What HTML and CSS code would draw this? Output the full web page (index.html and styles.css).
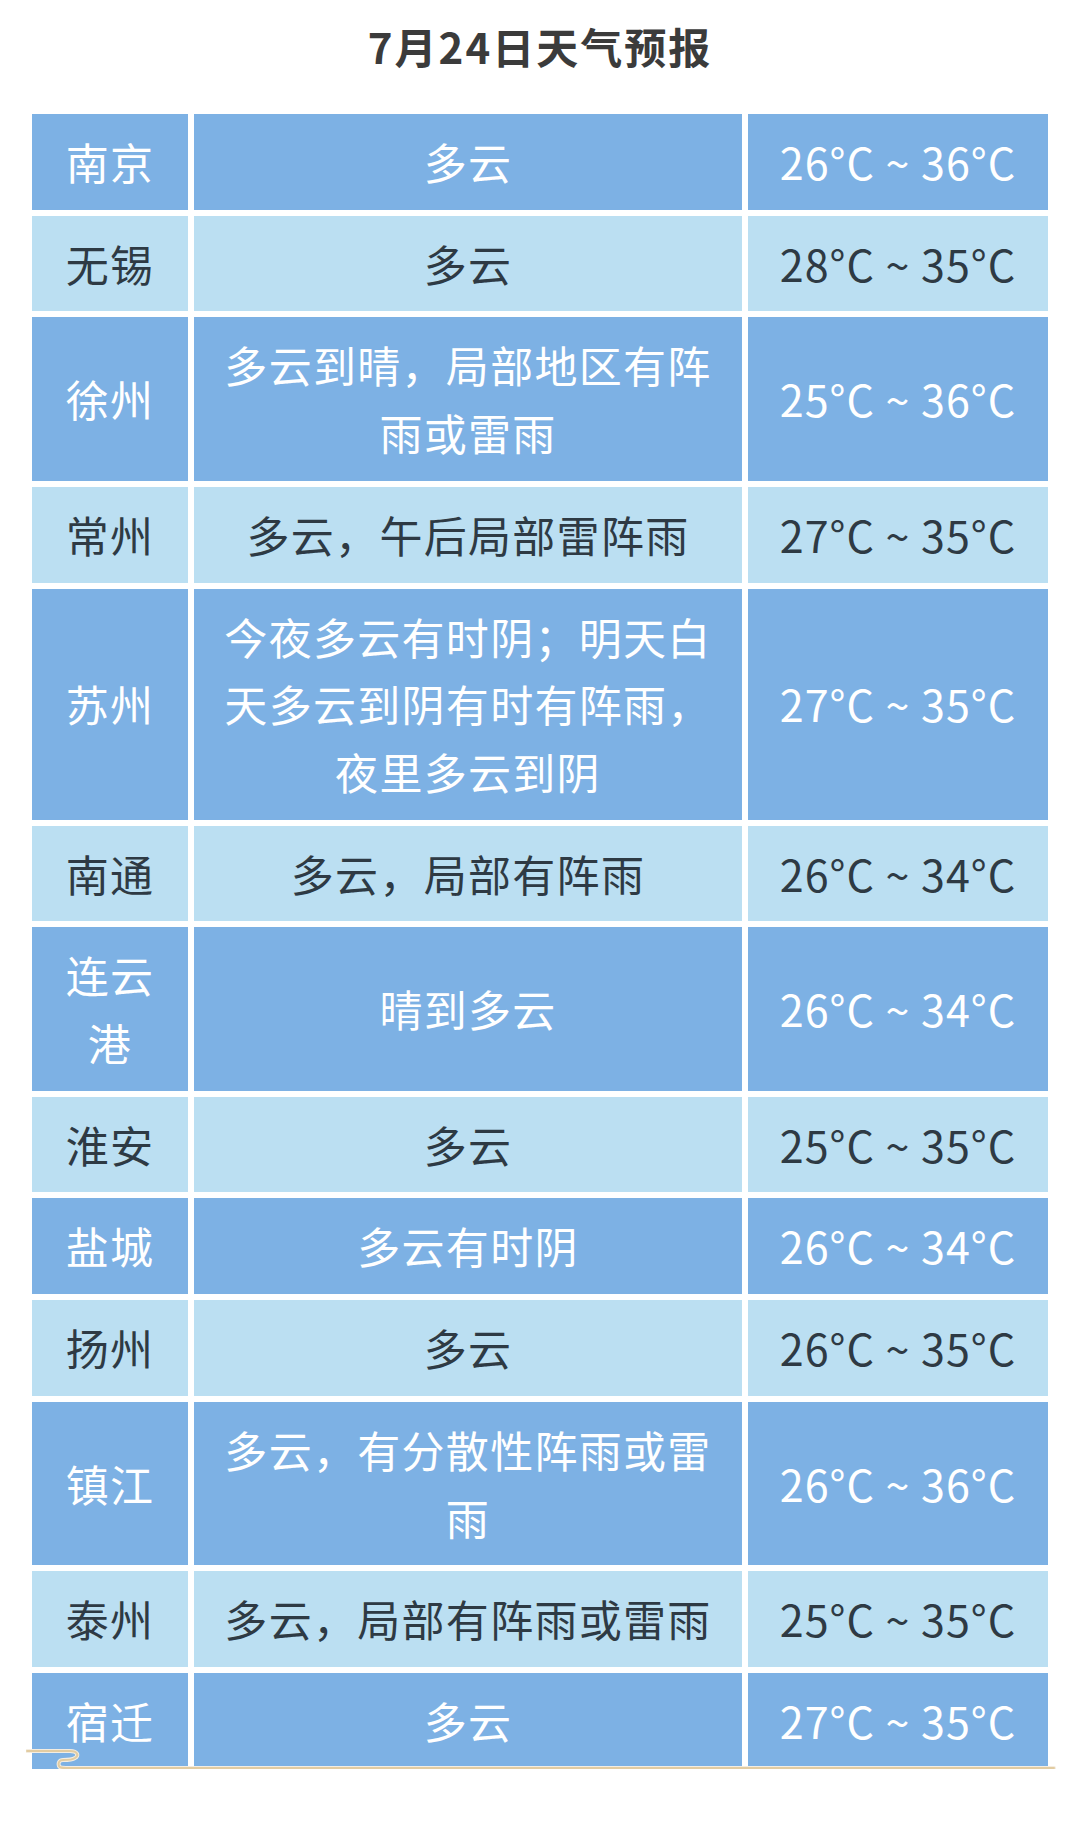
FILE: index.html
```html
<!DOCTYPE html>
<html lang="zh-CN">
<head>
<meta charset="utf-8">
<title>7月24日天气预报</title>
<link rel="stylesheet" href="styles.css">
</head>
<body>
<div class="page">
  <h1 class="title">7月24日天气预报</h1>
  <div class="table-wrap">
    <div class="grid">
      <div class="cell city dark">南京</div><div class="cell desc dark">多云</div><div class="cell temp dark">26°C ~ 36°C</div>
      <div class="cell city light">无锡</div><div class="cell desc light">多云</div><div class="cell temp light">28°C ~ 35°C</div>
      <div class="cell city dark">徐州</div><div class="cell desc dark">多云到晴，局部地区有阵雨或雷雨</div><div class="cell temp dark">25°C ~ 36°C</div>
      <div class="cell city light">常州</div><div class="cell desc light">多云，午后局部雷阵雨</div><div class="cell temp light">27°C ~ 35°C</div>
      <div class="cell city dark">苏州</div><div class="cell desc dark">今夜多云有时阴；明天白天多云到阴有时有阵雨，夜里多云到阴</div><div class="cell temp dark">27°C ~ 35°C</div>
      <div class="cell city light">南通</div><div class="cell desc light">多云，局部有阵雨</div><div class="cell temp light">26°C ~ 34°C</div>
      <div class="cell city dark">连云港</div><div class="cell desc dark">晴到多云</div><div class="cell temp dark">26°C ~ 34°C</div>
      <div class="cell city light">淮安</div><div class="cell desc light">多云</div><div class="cell temp light">25°C ~ 35°C</div>
      <div class="cell city dark">盐城</div><div class="cell desc dark">多云有时阴</div><div class="cell temp dark">26°C ~ 34°C</div>
      <div class="cell city light">扬州</div><div class="cell desc light">多云</div><div class="cell temp light">26°C ~ 35°C</div>
      <div class="cell city dark">镇江</div><div class="cell desc dark">多云，有分散性阵雨或雷雨</div><div class="cell temp dark">26°C ~ 36°C</div>
      <div class="cell city light">泰州</div><div class="cell desc light">多云，局部有阵雨或雷雨</div><div class="cell temp light">25°C ~ 35°C</div>
      <div class="cell city dark">宿迁</div><div class="cell desc dark">多云</div><div class="cell temp dark">27°C ~ 35°C</div>
    </div>
    <svg class="scroll-deco" width="1032" height="24" viewBox="0 0 1032 24" aria-hidden="true">
      <path d="M1 5 H44 C52 5 53 10 49 12 C46 14 40 14 37 14 C33 14 32 17 33 20 C34 22 36 22 40 22 H1028" fill="none" stroke="#f4ede1" stroke-width="4" stroke-linecap="round"/>
      <path d="M1 5 H44 C52 5 53 10 49 12 C46 14 40 14 37 14 C33 14 32 17 33 20 C34 22 36 22 40 22 H1028" fill="none" stroke="#e2cca2" stroke-width="2" stroke-linecap="round"/>
    </svg>
  </div>
</div>
</body>
</html>
```
FILE: styles.css
```css
html, body {
  margin: 0;
  padding: 0;
  background: #ffffff;
}

body {
  font-family: "Noto Sans CJK SC", "Noto Sans", sans-serif;
  color: #2e3a44;
}

.page {
  width: 1080px;
  padding-top: 16px;
}

.title {
  margin: 0 0 38px 0;
  height: 60px;
  line-height: 60px;
  text-align: center;
  font-size: 42px;
  font-weight: 700;
  letter-spacing: 2px;
  color: #3b3b3b;
}

.table-wrap {
  position: relative;
  margin-left: 32px;
  width: 1016px;
}

.grid {
  display: grid;
  grid-template-columns: 156px 548px 300px;
  column-gap: 6px;
  row-gap: 6px;
}

.cell {
  display: flex;
  align-items: center;
  justify-content: center;
  text-align: center;
  padding: 14px 14px;
  font-size: 43px;
  line-height: 67.7px;
  letter-spacing: 1.3px;
}

.desc {
  padding-left: 16px;
  padding-right: 16px;
}

.temp {
  padding-left: 8px;
  padding-right: 8px;
  letter-spacing: 1px;
}

.dark {
  background: #7db1e4;
  color: #ffffff;
}

.light {
  background: #bbdff2;
  color: #2e3a44;
}

.scroll-deco {
  position: absolute;
  left: -6px;
  bottom: -1px;
  display: block;
}
```
